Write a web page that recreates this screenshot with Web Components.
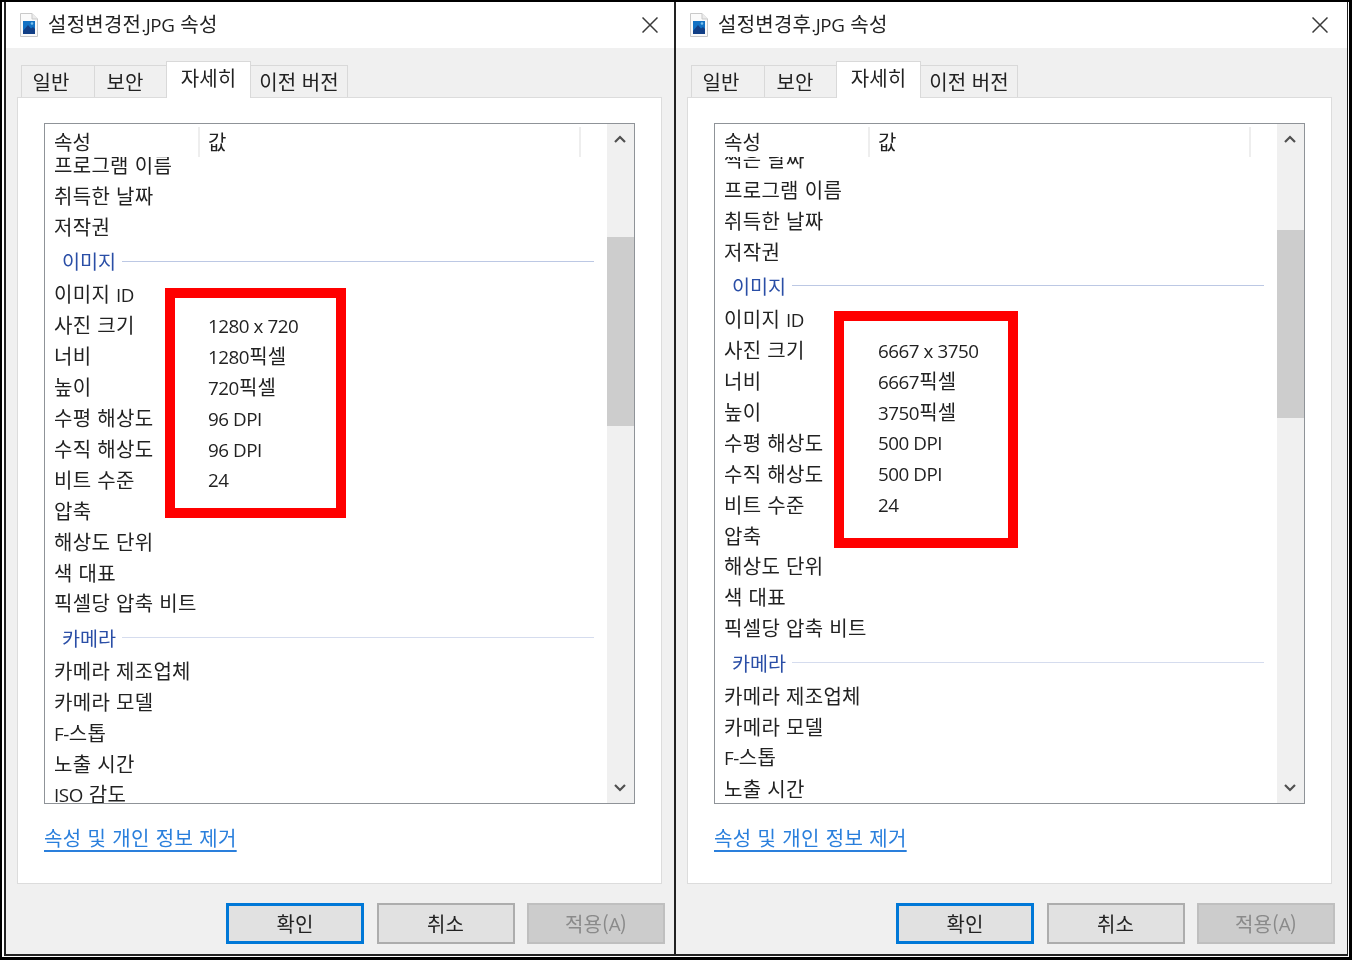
<!DOCTYPE html>
<html lang="ko">
<head>
<meta charset="utf-8">
<title>속성</title>
<style>
html,body{margin:0;padding:0;background:#fff;}
body{font-family:"Noto Sans CJK KR","Noto Sans",sans-serif;color:#222;}
</style>
</head>
<body>
<shot-frame>
  <prop-dialog id="d1" heading="설정변경전" w="668" offset="-7.5" thumb-top="83" thumb-h="189">
    <red-box slot="overlay" style="--x:159px;--y:288px;--w:181px;--h:230px"></red-box>
  </prop-dialog>
  <prop-dialog id="d2" heading="설정변경후" w="671" offset="-13.6" thumb-top="76" thumb-h="188">
    <red-box slot="overlay" style="--x:158px;--y:311px;--w:184px;--h:237px"></red-box>
  </prop-dialog>
</shot-frame>

<script>
const FONT = '"Noto Sans CJK KR","Noto Sans",sans-serif';

customElements.define('l-t', class extends HTMLElement {
  constructor(){super();this.attachShadow({mode:'open'}).innerHTML=
    `<style>:host{display:inline;font-family:"Open Sans","Noto Sans",sans-serif;font-size:.94em;letter-spacing:-.45px}</style><slot></slot>`;}
});

customElements.define('shot-frame', class extends HTMLElement {
  constructor(){super();this.attachShadow({mode:'open'}).innerHTML=`<style>
    :host{display:block;box-sizing:border-box;width:1352px;height:960px;background:#fff;
      border:solid #000;border-width:2px 3px 3px 2px;padding:0 1px 1px 2px}
    .in{box-sizing:border-box;height:100%;display:flex;gap:2px;background:#222;
      border:solid #222;border-width:0 1px 2px 2px}
  </style><div class="in"><slot></slot></div>`;}
});

customElements.define('red-box', class extends HTMLElement {
  constructor(){super();this.attachShadow({mode:'open'}).innerHTML=`<style>
    :host{position:absolute;box-sizing:border-box;left:var(--x);top:calc(var(--y) - 2px);width:var(--w);height:var(--h);
      border:10px solid #f00;pointer-events:none}
  </style>`;}
});

customElements.define('file-icon', class extends HTMLElement {
  constructor(){super();this.attachShadow({mode:'open'}).innerHTML=`<style>
    :host{display:block;width:18px;height:24px;flex:none}svg{display:block}
  </style><svg width="18" height="24" viewBox="0 0 18 24">
    <path d="M.5 .5H12L17.5 6V23.5H.5Z" fill="#fafafa" stroke="#c9c9c9"/>
    <path d="M12 .5V6H17.5" fill="#ececec" stroke="#c9c9c9"/>
    <rect x="3" y="8" width="12" height="13" fill="#1372c4"/>
    <path d="M3 18L8 12L11 15.5L13 14L15 16V21H3Z" fill="#123f86"/>
    <circle cx="12" cy="10.5" r="1.3" fill="#7ec4ee"/>
  </svg>`;}
});

customElements.define('dialog-tab', class extends HTMLElement {
  constructor(){super();this.attachShadow({mode:'open'}).innerHTML=`<style>
    :host{display:flex;box-sizing:border-box;height:32px;width:var(--w);margin-left:-1px;align-items:center;justify-content:center;
      padding-right:var(--pr,0);background:#f0f0f0;border:1px solid #d9d9d9;border-bottom:0;font-size:20px;line-height:30px;color:#222;letter-spacing:.1px}
    :host([active]){height:37px;background:#fff;position:relative;z-index:2;margin-bottom:-1px;padding-bottom:5px;border-color:#d9d9d9}
  </style><slot></slot>`;}
});

customElements.define('dialog-button', class extends HTMLElement {
  constructor(){super();this.attachShadow({mode:'open'}).innerHTML=`<style>
    :host{display:flex;box-sizing:border-box;width:138px;height:41px;align-items:center;justify-content:center;
      background:#e1e1e1;border:2px solid #adadad;font-size:20px;color:#222}
    :host([primary]){border:3px solid #0078d7}
    :host([disabled]){background:#cccccc;border-color:#bfbfbf;color:#8a8a8a}
  </style><slot></slot>`;}
});

customElements.define('prop-row', class extends HTMLElement {
  constructor(){super();this.attachShadow({mode:'open'}).innerHTML=`<style>
    :host{display:grid;grid-template-columns:154px 1fr;height:30.9px;align-items:center;padding-left:9px;
      font-size:20px;line-height:30px;color:#222;white-space:nowrap;letter-spacing:.3px}
    .v{display:block}
  </style><div><slot></slot></div><div class="v"><slot name="v"></slot></div>`;}
});

customElements.define('prop-group', class extends HTMLElement {
  constructor(){super();this.attachShadow({mode:'open'}).innerHTML=`<style>
    :host{display:flex;height:36.9px;align-items:center;padding-left:17px;padding-right:13px;gap:6px;
      font-size:19.6px;color:#2a4ea6;white-space:nowrap;box-sizing:border-box;width:100%}
    i{flex:1;height:1px;background:var(--line,#bcc8e4);margin-top:1px}
  </style><slot></slot><i></i>`;}
});

customElements.define('list-header', class extends HTMLElement {
  constructor(){super();this.attachShadow({mode:'open'}).innerHTML=`<style>
    :host{display:flex;box-sizing:border-box;height:33px;background:#fff;font-size:20px;line-height:30px;color:#222;position:relative;z-index:1}
    div{box-sizing:border-box;height:30px;margin-top:3px;padding-left:9px;border-right:2px solid #eeeeee}
    .a{width:155px}.b{width:381px;padding-left:8px}.c{flex:1;border:0}
    span{display:block}
  </style><div class="a"><span>속성</span></div><div class="b"><span>값</span></div><div class="c"></div>`;}
});

customElements.define('list-scrollbar', class extends HTMLElement {
  constructor(){super();this.attachShadow({mode:'open'}).innerHTML=`<style>
    :host{display:flex;flex-direction:column;flex:none;width:27px;background:#f0f0f0;box-sizing:border-box}
    .b{height:30px;display:flex;align-items:center;justify-content:center;flex:none;padding-right:2px}
    .t{background:#cdcdcd;flex:none}
    .s{flex:1}
    svg{display:block}
  </style>
  <div class="b"><svg width="14" height="10" viewBox="0 0 14 10"><path d="M2 8L7 3L12 8" fill="none" stroke="#505050" stroke-width="2.2"/></svg></div>
  <div class="t"></div><div class="s"></div>
  <div class="b"><svg width="14" height="10" viewBox="0 0 14 10"><path d="M2 2L7 7L12 2" fill="none" stroke="#505050" stroke-width="2.2"/></svg></div>`;
  }
});

customElements.define('prop-dialog', class extends HTMLElement {
  constructor(){super();this.attachShadow({mode:'open'}).innerHTML=`<style>
    :host{display:flex;flex-direction:column;position:relative;box-sizing:border-box;flex:none;height:100%;background:#f0f0f0;
      font-family:${FONT};color:#222;filter:blur(.3px)}
    .title{display:flex;align-items:center;height:46px;background:#fff;flex:none;font-size:20px;color:#222}
    .title .in{display:flex;align-items:center;width:652px;padding-left:14px;box-sizing:border-box}
    .title .txt{margin-left:10px;flex:1;white-space:nowrap;position:relative;top:-2px;letter-spacing:.25px}
    .tabs{display:flex;align-items:flex-end;height:49px;padding-left:15px;flex:none;box-sizing:border-box;position:relative;z-index:1}
    .panel{box-sizing:border-box;width:645px;height:787px;margin-left:11px;background:#fff;border:1px solid #dcdcdc;padding:25px 26px 0;flex:none}
    .list{display:flex;box-sizing:border-box;width:591px;height:681px;border:1px solid #8f9398;background:#fff}
    .main{flex:1;display:flex;flex-direction:column;min-width:0}
    .view{flex:1;overflow:hidden;min-height:0}
    .link{display:block;margin-top:17px;font-size:20px;line-height:34px;color:#2a7fdc;text-decoration:underline;text-underline-offset:4px;text-decoration-thickness:2px;white-space:nowrap;letter-spacing:.36px}
    .foot{display:flex;gap:12.5px;margin:19px 0 0 220px;flex:none}
  </style>
  <div class="title"><div class="in"><file-icon></file-icon><span class="txt"></span>
    <svg width="16" height="16" viewBox="0 0 16 16"><path d="M.5 .5L15.5 15.5M15.5 .5L.5 15.5" stroke="#3a3a3a" stroke-width="1.5" fill="none"/></svg></div></div>
  <div class="tabs">
    <dialog-tab style="--w:74px;--pr:14px;margin-left:0">일반</dialog-tab>
    <dialog-tab style="--w:73px;--pr:11px">보안</dialog-tab>
    <dialog-tab active style="--w:85px">자세히</dialog-tab>
    <dialog-tab style="--w:98px">이전 버전</dialog-tab>
  </div>
  <div class="panel">
    <div class="list">
      <div class="main">
        <list-header></list-header>
        <div class="view"><div class="rows"><slot></slot></div></div>
      </div>
      <list-scrollbar></list-scrollbar>
    </div>
    <a class="link">속성 및 개인 정보 제거</a>
  </div>
  <div class="foot">
    <dialog-button primary>확인</dialog-button>
    <dialog-button>취소</dialog-button>
    <dialog-button disabled>적용(<l-t>A</l-t>)</dialog-button>
  </div>
  <slot name="overlay"></slot>`;}
  connectedCallback(){
    const s=this.shadowRoot;
    this.style.width=this.getAttribute('w')+'px';
    s.querySelector('.txt').innerHTML=this.getAttribute('heading')+'<l-t>.JPG</l-t> 속성';
    s.querySelector('.rows').style.marginTop=this.getAttribute('offset')+'px';
    const t=s.querySelector('list-scrollbar').shadowRoot.querySelector('.t');
    t.style.marginTop=this.getAttribute('thumb-top')+'px';t.style.height=this.getAttribute('thumb-h')+'px';
  }
});

function rows(vals, second){
  const r=(n,v)=>`<prop-row>${n}${v?`<span slot="v">${v}</span>`:''}</prop-row>`;
  const L=s=>`<l-t>${s}</l-t>`;
  return (second?r('찍은 날짜'):'')+
    r('프로그램 이름')+r('취득한 날짜')+r('저작권')+
    '<prop-group>이미지</prop-group>'+
    r('이미지 '+L('ID'))+
    r('사진 크기',L(vals[0]))+
    r('너비',L(vals[1])+'픽셀')+
    r('높이',L(vals[2])+'픽셀')+
    r('수평 해상도',L(vals[3]))+
    r('수직 해상도',L(vals[3]))+
    r('비트 수준',L('24'))+
    r('압축')+r('해상도 단위')+r('색 대표')+r('픽셀당 압축 비트')+
    '<prop-group style="--line:#d5dcee">카메라</prop-group>'+
    r('카메라 제조업체')+r('카메라 모델')+r(L('F-')+'스톱')+r('노출 시간')+(second?'':r(L('ISO')+' 감도'));
}
document.getElementById('d1').insertAdjacentHTML('afterbegin',rows(['1280 x 720','1280','720','96 DPI'],false));
document.getElementById('d2').insertAdjacentHTML('afterbegin',rows(['6667 x 3750','6667','3750','500 DPI'],true));
</script>
</body>
</html>
